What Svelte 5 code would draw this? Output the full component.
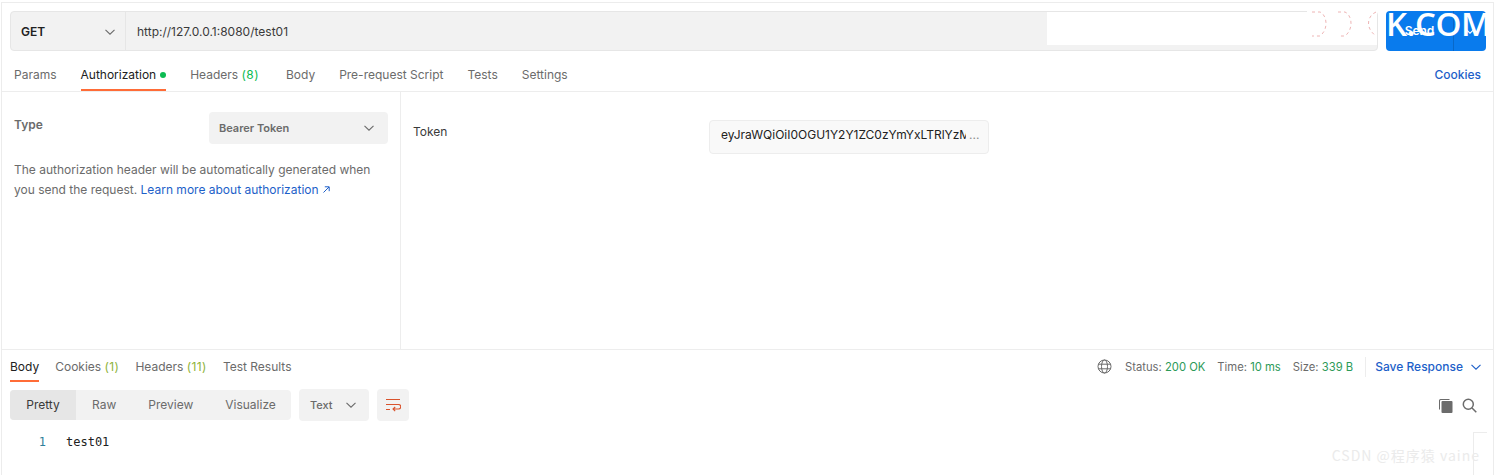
<script>
  const reqTabs = [
    { label: 'Params' },
    { label: 'Authorization', active: true, dot: true },
    { label: 'Headers', count: '(8)' },
    { label: 'Body' },
    { label: 'Pre-request Script' },
    { label: 'Tests' },
    { label: 'Settings' }
  ];
  const resTabs = [
    { label: 'Body', active: true },
    { label: 'Cookies', count: '(1)' },
    { label: 'Headers', count: '(11)' },
    { label: 'Test Results' }
  ];
  const views = ['Pretty', 'Raw', 'Preview', 'Visualize'];
  const meta = [['Status:', '200 OK'], ['Time:', '10 ms'], ['Size:', '339 B']];
</script>

{#snippet chevron(color)}
  <svg class="chev" width="12" height="12" viewBox="0 0 12 12" fill="none" stroke={color} stroke-width="1.1"><path d="M1.5 3.8 6 8.2l4.5-4.4" /></svg>
{/snippet}

<div class="app">
  <div class="urlrow">
    <div class="urlbar">
      <div class="method"><span>GET</span>{@render chevron('#6b6b6b')}</div>
      <div class="url">http://127.0.0.1:8080/test01</div>
    </div>
    <div class="send">
      <div class="send-main">Send</div>
      <div class="send-more">{@render chevron('#ffffff')}</div>
    </div>
    <div class="mask"></div>
    <div class="mask-top"></div>
    <svg class="arcs" width="70" height="26" viewBox="0 0 70 26" fill="none" stroke="#eeb4b4" stroke-width="1" stroke-dasharray="3 3">
      <path d="M2 1h8c7 3 9 17 0 24H2M28 1h7c7 3 9 17 0 24h-7M66 1c-9 4-11 16 0 24" />
    </svg>
    <div class="wm-top">K.COM</div>
  </div>

  <nav class="tabs req">
    {#each reqTabs as t}
      <div class="tab" class:active={t.active}>
        {t.label}{#if t.count}&nbsp;<span class="count">{t.count}</span>{/if}{#if t.dot}<i class="dot"></i>{/if}
      </div>
    {/each}
    <div class="cookies">Cookies</div>
  </nav>

  <section class="auth">
    <div class="left">
      <div class="typerow">
        <div class="type">Type</div>
        <div class="select"><span>Bearer Token</span>{@render chevron('#6b6b6b')}</div>
      </div>
      <p class="help">The authorization header will be automatically generated when you send the request. <span class="link">Learn more about authorization <svg width="9" height="9" viewBox="0 0 9 9" fill="none" stroke="#1d5fc9" stroke-width="1"><path d="M1.5 7.5 7 2M2.8 1.8h4.4v4.4" /></svg></span></p>
    </div>
    <div class="right">
      <div class="token-label">Token</div>
      <div class="token"><span>eyJraWQiOiI0OGU1Y2Y1ZC0zYmYxLTRlYzM</span><em>...</em></div>
    </div>
  </section>

  <section class="response">
    <div class="resbar">
      <nav class="tabs res">
        {#each resTabs as t}
          <div class="tab" class:active={t.active}>
            {t.label}{#if t.count}&nbsp;<span class="count">{t.count}</span>{/if}
          </div>
        {/each}
      </nav>
      <div class="meta">
        <svg class="globe" width="15" height="15" viewBox="0 0 15 15" fill="none" stroke="#6b6b6b" stroke-width="1"><circle cx="7.5" cy="7.5" r="6.5" /><ellipse cx="7.5" cy="7.5" rx="3" ry="6.5" /><path d="M1.4 5.2h12.2M1.4 9.8h12.2" /></svg>
        {#each meta as m}
          <span class="metaitem">{m[0]} <b>{m[1]}</b></span>
        {/each}
        <span class="sep"></span>
        <span class="save">Save Response {@render chevron('#1d5fc9')}</span>
      </div>
    </div>

    <div class="toolbar">
      <div class="views">
        {#each views as v, i}
          <div class="view" class:on={i === 0}>{v}</div>
        {/each}
      </div>
      <div class="fmt"><span>Text</span>{@render chevron('#6b6b6b')}</div>
      <div class="wrap">
        <svg width="16" height="14" viewBox="0 0 16 14" fill="none" stroke="#d9532c" stroke-width="1.1"><path d="M1 1.5h14M1 6.5h12.5a1.9 1.9 0 0 1 0 4.5H8.5M1 11.5h4M10.2 9 8 11l2.2 2.2" /></svg>
      </div>
      <div class="tools">
        <svg width="15" height="15" viewBox="0 0 15 15"><path d="M1 11.5V2.5A1.5 1.5 0 0 1 2.500 1h9v1H3a1 1 0 0 0-1 1v8.500z" fill="#6b6b6b" /><rect x="3.500" y="3" width="11" height="12" rx="1" fill="#6b6b6b" /></svg>
        <svg width="15" height="15" viewBox="0 0 15 15" fill="none" stroke="#6b6b6b" stroke-width="1.500"><circle cx="6.300" cy="6.300" r="5" /><path d="m10 10 4.300 4.300" /></svg>
      </div>
    </div>

    <div class="code"><span class="ln">1</span><span class="src">test01</span></div>
    <div class="wm-bottom">CSDN @程序猿 vaine</div>
    <div class="corner"></div>
  </section>
</div>

<style>
  :global(body) { margin: 0; background: #fff; }
  .app {
    box-sizing: border-box;
    width: 1493px;
    height: 473px;
    margin: 2px 0 0 1px;
    border-top: 1px solid #ececec;
    border-left: 1px solid #ececec;
    border-right: 1px solid #ececec;
    font: 12px/16px Inter, "Liberation Sans", sans-serif;
    color: #6b6b6b;
    display: flex;
    flex-direction: column;
    position: relative;
  }
  .urlrow {
    display: flex;
    gap: 8px;
    padding: 8px 7px 0 8px;
    height: 40px;
    position: relative;
  }
  .urlbar {
    flex: 1;
    display: flex;
    background: #f2f2f2;
    border: 1px solid #e6e6e6;
    border-radius: 4px;
    box-sizing: border-box;
  }
  .method {
    box-sizing: border-box;
    width: 115px;
    display: flex;
    align-items: center;
    justify-content: space-between;
    padding: 1px 9px 0 10px;
    border-right: 1px solid #e6e6e6;
    font-weight: 600;
    color: #212121;
  }
  .url { padding: 1px 0 0 11px; display: flex; align-items: center; color: #3a3a3a; }
  .chev { flex: none; display: inline-block; }
  .send {
    width: 100px;
    display: flex;
    background: #097bed;
    border-radius: 4px;
    color: #fff;
    font-weight: 600;
  }
  .send-main { flex: 1; display: flex; align-items: center; justify-content: center; border-right: 1px solid #0868c8; }
  .send-more { width: 32px; display: flex; align-items: center; justify-content: center; }
  .mask {
    position: absolute;
    left: 1045px;
    top: 9px;
    width: 330px;
    height: 33px;
    background: #fff;
  }
  .mask-top {
    position: absolute;
    left: 1305px;
    top: 7px;
    width: 70px;
    height: 4px;
    background: #fff;
  }
  .arcs { position: absolute; left: 1308px; top: 8px; }
  .wm-top {
    position: absolute;
    left: 1384px;
    top: 8px;
    width: 100px;
    height: 26px;
    font: 600 33px/26px "Open Sans", sans-serif;
    letter-spacing: -0.5px;
    color: #fff;
    overflow: hidden;
    white-space: nowrap;
  }
  .tabs { display: flex; }
  .req {
    margin-top: 8px;
    height: 33px;
    box-sizing: border-box;
    padding: 0 12px 0 12px;
    gap: 24px;
    border-bottom: 1px solid #ededed;
    align-items: stretch;
  }
  .tab {
    display: flex;
    align-items: center;
    white-space: nowrap;
    position: relative;
  }
  .tab.active { color: #212121; }
  .tab.active::after {
    content: "";
    position: absolute;
    left: 0;
    right: 0;
    bottom: 0;
    height: 2px;
    background: #ff6c37;
  }
  .count { color: #0cbb52; letter-spacing: 0.4px; }
  .req .count { margin-right: 3px; }
  .res .tab { padding-top: 1px; }
  .res .count { color: #8eb33b; }
  .dot { width: 6px; height: 6px; border-radius: 50%; background: #0cbb52; margin-left: 4px; }
  .cookies { margin-left: auto; align-self: center; color: #1d5fc9; font-weight: 500; }
  .auth { flex: none; height: 258px; display: flex; border-bottom: 1px solid #ededed; box-sizing: border-box; }
  .left {
    box-sizing: border-box;
    width: 399px;
    border-right: 1px solid #ededed;
    padding: 20px 12px 0 12px;
  }
  .typerow { display: flex; justify-content: space-between; align-items: flex-start; }
  .type { font-weight: 600; padding-top: 5px; line-height: 16px; }
  .select {
    box-sizing: border-box;
    width: 179px;
    height: 32px;
    background: #f2f2f2;
    border-radius: 4px;
    display: flex;
    align-items: center;
    justify-content: space-between;
    padding: 0 13px 0 10px;
    font-size: 11px;
    font-weight: 600;
  }
  .help { margin: 16px 0 0; line-height: 20px; width: 370px; }
  .link { color: #1d5fc9; }
  .right { flex: 1; display: flex; align-items: flex-start; padding: 28px 0 0 12px; }
  .token-label { width: 296px; color: #3a3a3a; padding-top: 4px; }
  .token {
    box-sizing: border-box;
    width: 280px;
    height: 34px;
    background: #f9f9f9;
    border: 1px solid #ededed;
    border-radius: 4px;
    padding: 0 10px 5px 11px;
    display: flex;
    align-items: center;
    color: #212121;
  }
  .token span { width: 245px; overflow: hidden; white-space: nowrap; flex: none; }
  .token em { font-style: normal; color: #8c8c8c; margin-left: 3px; }
  .response { flex: 1; position: relative; padding: 0 8px 0 8px; }
  .resbar { display: flex; justify-content: space-between; height: 32px; }
  .res { gap: 16px; }
  .meta { display: flex; align-items: center; gap: 12px; font-size: 11.25px; padding: 1px 3px 0 0; }
  .metaitem b { font-weight: 400; color: #2c9a58; }
  .globe { margin-right: 1px; }
  .sep { width: 1px; height: 20px; background: #ededed; margin-right: -3px; }
  .save { display: flex; align-items: center; gap: 7px; color: #1d5fc9; font-size: 12px; font-weight: 500; }
  .toolbar { display: flex; align-items: center; gap: 8px; margin-top: 8px; height: 30px; }
  .views { display: flex; background: #f2f2f2; border-radius: 4px; width: 281px; height: 30px; box-sizing: border-box; }
  .view { padding: 0 16px; display: flex; align-items: center; justify-content: center; flex: none; }
  .view.on { background: #e6e6e6; border-radius: 4px 0 0 4px; color: #3a3a3a; width: 66px; box-sizing: border-box; padding: 0; }
  .fmt {
    box-sizing: border-box;
    width: 70px;
    height: 32px;
    background: #f2f2f2;
    border-radius: 4px;
    display: flex;
    align-items: center;
    justify-content: space-between;
    padding: 0 12px 0 11px;
    font-size: 11px;
    font-weight: 500;
  }
  .wrap { width: 32px; height: 32px; background: #f2f2f2; border-radius: 4px; display: flex; align-items: center; justify-content: center; }
  .tools { margin-left: auto; display: flex; gap: 9px; align-items: center; padding-right: 8px; }
  .code { display: flex; margin-top: 13px; padding-top: 1px; font: 12px/16px "DejaVu Sans Mono", monospace; }
  .ln { width: 36px; text-align: right; color: #2f7f9b; }
  .src { margin-left: 20px; color: #212121; }
  .wm-bottom {
    position: absolute;
    right: 13px;
    bottom: 11px;
    font: 14px/18px "Noto Sans CJK SC", sans-serif;
    letter-spacing: 1px;
    color: #ebebeb;
  }
  .corner {
    position: absolute;
    right: 6px;
    top: 82px;
    width: 13px;
    height: 42px;
    border-left: 1px solid #ececec;
    border-top: 1px solid #ececec;
  }
</style>
